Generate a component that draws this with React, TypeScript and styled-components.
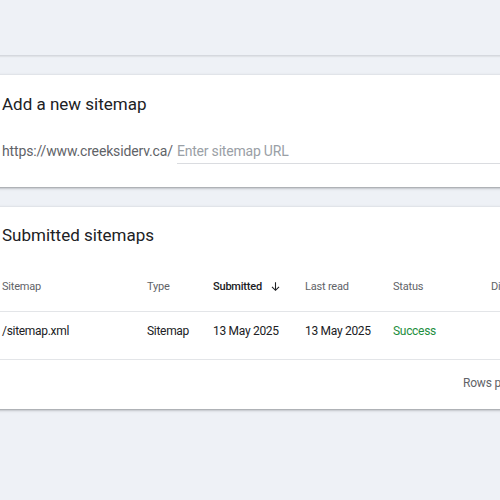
import React from 'react';
import styled, { createGlobalStyle } from 'styled-components';

const GlobalStyle = createGlobalStyle`
  html, body {
    margin: 0;
    padding: 0;
    background: #eef1f6;
    overflow: hidden;
    font-family: Roboto, "Liberation Sans", Arial, sans-serif;
  }
`;

const columns = [
  { label: 'Sitemap', width: 145 },
  { label: 'Type', width: 66 },
  { label: 'Submitted', width: 92, sorted: true },
  { label: 'Last read', width: 88 },
  { label: 'Status', width: 98 },
  { label: 'Discovered pages', width: 140 },
];

const rows = [
  {
    sitemap: '/sitemap.xml',
    type: 'Sitemap',
    submitted: '13 May 2025',
    lastRead: '13 May 2025',
    status: 'Success',
    pages: '',
  },
];

const App = () => {
  return (
    <S.Page>
      <GlobalStyle />
      <S.TopBar />
      <S.Content>
        <S.Card>
          <S.Title>Add a new sitemap</S.Title>
          <S.InputRow>
            <S.Prefix>https://www.creeksiderv.ca/</S.Prefix>
            <S.Input placeholder="Enter sitemap URL" />
          </S.InputRow>
        </S.Card>

        <S.Card $tall>
          <S.Title>Submitted sitemaps</S.Title>
          <S.Table>
            <S.HeadRow>
              {columns.map((c) => (
                <S.HeadCell key={c.label} $w={c.width} $active={c.sorted}>
                  {c.label}
                  {c.sorted && (
                    <S.SortIcon viewBox="0 0 24 24">
                      <path d="M12 4v15M5.5 12.5L12 19l6.5-6.5" />
                    </S.SortIcon>
                  )}
                </S.HeadCell>
              ))}
            </S.HeadRow>
            {rows.map((r) => (
              <S.Row key={r.sitemap}>
                <S.Cell $w={columns[0].width}>{r.sitemap}</S.Cell>
                <S.Cell $w={columns[1].width}>{r.type}</S.Cell>
                <S.Cell $w={columns[2].width}>{r.submitted}</S.Cell>
                <S.Cell $w={columns[3].width}>{r.lastRead}</S.Cell>
                <S.Cell $w={columns[4].width} $ok>
                  {r.status}
                </S.Cell>
                <S.Cell $w={columns[5].width}>{r.pages}</S.Cell>
              </S.Row>
            ))}
          </S.Table>
          <S.Footer>
            <S.FooterText>Rows per page:</S.FooterText>
          </S.Footer>
        </S.Card>
      </S.Content>
    </S.Page>
  );
};

export default App;

const S = {
  Page: styled.div`
    width: 500px;
    height: 500px;
    overflow: hidden;
    background: #eef1f6;
  `,

  TopBar: styled.div`
    height: 55px;
    background: #eef1f6;
    border-bottom: 1px solid #d5d8de;
    box-shadow: 0 1px 1px rgba(60, 64, 67, 0.08);
  `,

  Content: styled.div`
    margin-left: -22px;
    width: 700px;
    padding-top: 19px;
    display: flex;
    flex-direction: column;
    gap: 20px;
  `,

  Card: styled.section<{ $tall?: boolean }>`
    background: #fff;
    border-radius: 4px;
    box-shadow: 0 1px 2px rgba(60, 64, 67, 0.35), 0 1px 3px 1px rgba(60, 64, 67, 0.15);
    padding: ${(p) => (p.$tall ? '16px' : '17px')} 24px 0;
    height: ${(p) => (p.$tall ? '202px' : '112px')};
    box-sizing: border-box;
  `,

  Title: styled.h2`
    margin: 0;
    font-size: 17px;
    line-height: 24px;
    font-weight: 400;
    color: #202124;
  `,

  InputRow: styled.div`
    display: flex;
    align-items: flex-end;
    margin-top: 23px;
  `,

  Prefix: styled.span`
    font-size: 14px;
    letter-spacing: -0.15px;
    line-height: 24px;
    color: #5f6368;
    padding-bottom: 1px;
    margin-right: 4px;
  `,

  Input: styled.input`
    flex: 1;
    border: none;
    border-bottom: 1px solid #dadce0;
    outline: none;
    font-family: inherit;
    font-size: 14px;
    letter-spacing: -0.2px;
    line-height: 24px;
    height: 25px;
    box-sizing: border-box;
    padding: 0;
    color: #202124;
    background: transparent;
    &::placeholder {
      color: #9aa0a6;
    }
  `,

  Table: styled.div`
    margin-top: 14px;
  `,

  HeadRow: styled.div`
    display: flex;
    height: 50px;
    align-items: center;
    border-bottom: 1px solid #e3e5e8;
    margin: 0 -24px;
    padding: 0 24px;
  `,

  HeadCell: styled.div<{ $w: number; $active?: boolean }>`
    flex: 0 0 ${(p) => p.$w}px;
    display: flex;
    align-items: center;
    font-size: 11px;
    letter-spacing: -0.2px;
    font-weight: ${(p) => (p.$active ? 500 : 400)};
    color: ${(p) => (p.$active ? '#202124' : '#5f6368')};
    white-space: nowrap;
  `,

  SortIcon: styled.svg`
    width: 13px;
    height: 13px;
    margin-left: 7px;
    fill: none;
    stroke: #202124;
    stroke-width: 2;
  `,

  Row: styled.div`
    display: flex;
    height: 48px;
    align-items: flex-start;
    padding: 12px 24px 0;
    box-sizing: border-box;
    border-bottom: 1px solid #e3e5e8;
    margin: 0 -24px;
  `,

  Cell: styled.div<{ $w: number; $ok?: boolean }>`
    flex: 0 0 ${(p) => p.$w}px;
    font-size: 12px;
    letter-spacing: -0.3px;
    line-height: 14px;
    color: ${(p) => (p.$ok ? '#1e8e3e' : '#202124')};
    white-space: nowrap;
  `,

  Footer: styled.div`
    display: flex;
    height: 48px;
    align-items: center;
    padding: 0 0 3px 461px;
    box-sizing: border-box;
  `,

  FooterText: styled.span`
    font-size: 12px;
    letter-spacing: -0.2px;
    color: #5f6368;
    white-space: nowrap;
  `,
};
